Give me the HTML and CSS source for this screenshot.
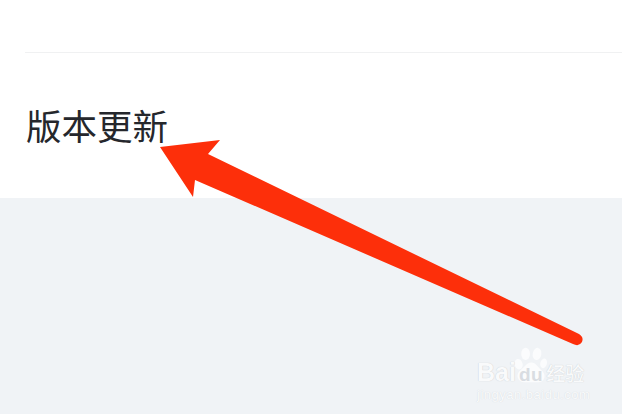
FILE: index.html
```html
<!DOCTYPE html>
<html lang="zh">
<head>
<meta charset="utf-8">
<title>版本更新</title>
<link rel="stylesheet" href="styles.css">
</head>
<body>
<main class="page">
  <section class="panel">
    <div class="divider"></div>
    <h1 class="title">版本更新</h1>
  </section>
  <section class="rest"></section>
  <svg class="arrow" viewBox="0 0 622 414" width="622" height="414" aria-hidden="true">
    <path class="arrow-fill" d="M160 147 L220 140 L208 154 L579 334 Q584 337 582 342 Q579 347 573 344 L195 180 L193 197 Z"/>
  </svg>
  <div class="mark">
    <svg class="paw" viewBox="0 0 40 44" width="33" height="36" aria-hidden="true">
      <ellipse cx="5.500" cy="21" rx="4.800" ry="6.500" transform="rotate(-15 5.500 21)"/>
      <ellipse cx="14" cy="8.500" rx="5.300" ry="7.500"/>
      <ellipse cx="28" cy="8.500" rx="5.300" ry="7.500" transform="rotate(10 28 8.500)"/>
      <ellipse cx="36" cy="20" rx="4" ry="6" transform="rotate(15 36 20)"/>
      <path d="M21 19 C15 19 14 24 8 28 C1 33 4 43 13 43 L29 43 C38 43 40 33 33 28 C28 24 27 19 21 19 Z"/>
    </svg>
    <div class="mark-row">
      <span class="mark-bai">Bai</span><span class="mark-du">du</span><span class="mark-cn">经验</span>
    </div>
    <div class="mark-url">jingyan.baidu.com</div>
  </div>
</main>
</body>
</html>
```
FILE: styles.css
```css
* { box-sizing: border-box; }
html, body { margin: 0; padding: 0; }
body { width: 622px; height: 414px; overflow: hidden; background: #f0f3f6; }
.page {
  position: relative;
  width: 622px;
  height: 414px;
  display: flex;
  flex-direction: column;
  font-family: "Noto Sans CJK SC", "Liberation Sans", sans-serif;
}
.panel {
  height: 198px;
  background: #fff;
  padding: 52px 0 0 25px;
}
.divider { height: 1px; background: #f0f1f2; }
.title {
  margin: 47px 0 0 1px;
  font-size: 35.500px;
  line-height: 50px;
  font-weight: 400;
  color: #25272c;
}
.rest { flex: 1; background: #f0f3f6; }
.arrow { position: absolute; left: 0; top: 0; }
.arrow-fill { fill: #fd2f0a; }
.mark {
  position: absolute;
  left: 476px;
  top: 347px;
  width: 115px;
  height: 64px;
  color: #f9fafb;
  font-family: "Liberation Sans", "Noto Sans CJK SC", sans-serif;
}
.paw {
  position: absolute;
  left: 38px;
  top: 0;
  fill: #fbfcfd;
}
.mark-row {
  position: absolute;
  left: 1px;
  top: 11px;
  height: 28px;
  display: flex;
  align-items: baseline;
  white-space: nowrap;
  text-shadow: 0 0 1px #bfc3c8;
}
.mark-bai { font-size: 25px; line-height: 28px; font-weight: 700; }
.mark-du {
  font-size: 19px;
  line-height: 28px;
  font-weight: 700;
  letter-spacing: .5px;
  color: #d9dde2;
  margin-left: 3px;
  text-shadow: none;
}
.mark-cn {
  font-family: "Noto Sans CJK SC", sans-serif;
  font-size: 19px;
  line-height: 28px;
  margin-left: 3px;
  font-weight: 500;
}
.mark-url {
  position: absolute;
  left: 1px;
  top: 40px;
  font-size: 13px;
  line-height: 16px;
  white-space: nowrap;
  letter-spacing: .5px;
  text-shadow: 0 0 1px #cfd3d8;
}
```
